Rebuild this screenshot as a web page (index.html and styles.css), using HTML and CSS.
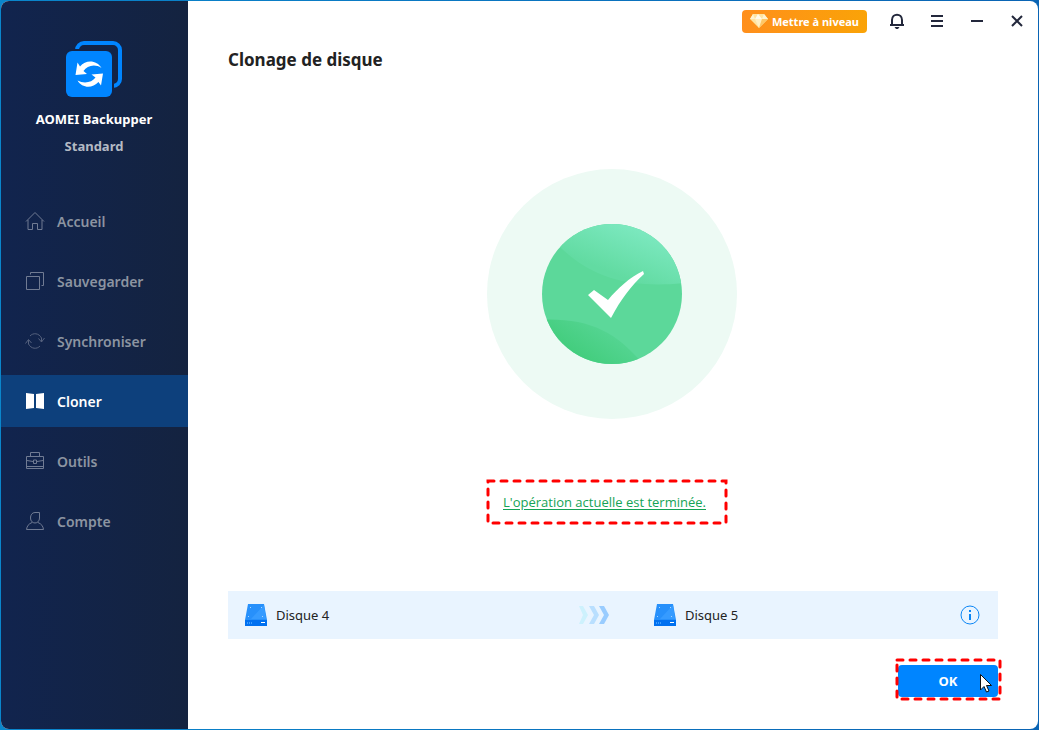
FILE: index.html
```html
<!DOCTYPE html>
<html lang="fr">
<head>
    <meta charset="UTF-8">
    <meta name="viewport" content="width=device-width, initial-scale=1.0">
    <title>AOMEI Backupper</title>
    <link rel="stylesheet" href="styles.css">
</head>
<body>
    <div class="window">
        <aside class="sidebar">
            <div class="brand">
                <svg class="logo" viewBox="0 0 56 56" aria-hidden="true">
                    <rect x="11" y="2" width="43" height="43" rx="7" fill="none" stroke="#0085ff" stroke-width="4"/>
                    <rect x="-1" y="8" width="49" height="49" rx="7" fill="#132346"/>
                    <rect x="0" y="10" width="46" height="46" rx="6" fill="#0085ff"/>
                    <path d="M11.500 21.500 L9.500 34 L21 33 L17.500 30 C21 24.500 29 22.500 35.500 27 C31 19 20 18 14 25.500 Z" fill="#fff"/>
                    <path d="M35 44.500 L37 32.500 L25.500 33.500 L29.500 36.500 C26 41.500 18 43 11.500 39.500 C16 47 26 48 32.500 41 Z" fill="#fff"/>
                </svg>
                <strong class="brand-name">AOMEI Backupper</strong>
                <span class="brand-edition">Standard</span>
            </div>
            <nav class="menu">
                <a href="#accueil" class="menu-item">
                    <svg viewBox="0 0 20 20"><path d="M1 10.500 L10 1.500 L19 10.500 M3 9 V18.500 H7.500 V12.500 H12.500 V18.500 H17 V9"/></svg>
                    Accueil
                </a>
                <a href="#sauvegarder" class="menu-item">
                    <svg viewBox="0 0 20 20"><path d="M1.500 5.500 H14.500 V18.500 H1.500 Z M5.500 3.500 V1.500 H18.500 V14.500 H16.500"/></svg>
                    Sauvegarder
                </a>
                <a href="#synchroniser" class="menu-item dim">
                    <svg viewBox="0 0 20 20"><path d="M5 5 C8 1.500 14 2 16.500 7 V11 M13.500 7.500 L16.500 11 L19.500 7 M15 15 C12 18.500 6 18 3.500 13 V9 M0.500 12.500 L3.500 8.500 L6.500 12"/></svg>
                    Synchroniser
                </a>
                <a href="#cloner" class="menu-item active" aria-current="page">
                    <svg viewBox="0 0 20 20"><path class="solid" d="M1 2 L9 3 V17 L1 18 Z M11 3 L19 2 V18 L11 17 Z"/></svg>
                    Cloner
                </a>
                <a href="#outils" class="menu-item">
                    <svg viewBox="0 0 20 20"><path d="M1.500 5.500 H18.500 V17.500 H1.500 Z M5.500 5.500 V1.500 H14.500 V5.500 M2 9.500 L8 10.500 M12 10.500 L18 9.500 M8.500 9 H11.500 V12.500 H8.500 Z M2 15.500 H18"/></svg>
                    Outils
                </a>
                <a href="#compte" class="menu-item">
                    <svg viewBox="0 0 20 20"><path d="M14.500 1.500 H10 C7 1.500 5.500 4 5.500 7 C5.500 10 7.500 12 10 12 C12.500 12 14.500 10 14.500 7 Z M7 11.500 C3.500 13 2 15 1.500 18.500 H18.500 C18 15 16.500 13 13 11.500"/></svg>
                    Compte
                </a>
            </nav>
        </aside>

        <main class="content">
            <div class="titlebar">
                <button type="button" class="upgrade">
                    <svg viewBox="0 0 20 16" aria-hidden="true">
                        <path d="M4 1 H15 L19 6 L10 15 L1 6 Z" fill="#ffe3a0"/>
                        <path d="M4 1 L6 6 H1 Z M15 1 L13 6 H19 Z" fill="#fff3d0"/>
                        <path d="M6 6 L9 1 L13 6 Z" fill="#fffbee"/>
                        <path d="M6 6 H13 L10 15 Z" fill="#ffefc4"/>
                        <path d="M13 6 H19 L10 15 Z" fill="#ffc766"/>
                    </svg>
                    Mettre à niveau
                </button>
                <button type="button" class="tool" aria-label="Notifications">
                    <svg viewBox="0 0 16 16"><path d="M1 12 H15 M3 12 V7 C3 0 13 0 13 7 V12"/><path class="fill" d="M5.500 14 H10.500 L9 16 H7 Z"/></svg>
                </button>
                <button type="button" class="tool" aria-label="Menu">
                    <svg viewBox="0 0 16 16"><path d="M2 3 H14 M2 8 H14 M2 13 H14"/></svg>
                </button>
                <button type="button" class="tool" aria-label="Réduire">
                    <svg viewBox="0 0 16 16"><path d="M2 8 H14"/></svg>
                </button>
                <button type="button" class="tool" aria-label="Fermer">
                    <svg viewBox="0 0 16 16"><path d="M3 3 L13 13 M13 3 L3 13"/></svg>
                </button>
            </div>

            <div class="page">
                <h1>Clonage de disque</h1>

                <section class="result">
                    <div class="result-inner">
                        <svg class="success" viewBox="0 0 250 250" role="img" aria-label="Terminé">
                            <defs>
                                <clipPath id="disc"><circle cx="125" cy="125" r="70"/></clipPath>
                                <linearGradient id="light" x1="0.300" y1="0.700" x2="0.800" y2="0.100">
                                    <stop offset="0" stop-color="#62dba2"/>
                                    <stop offset="1" stop-color="#81ebc5"/>
                                </linearGradient>
                                <linearGradient id="dark" x1="0.300" y1="0.800" x2="0.900" y2="0.400">
                                    <stop offset="0" stop-color="#40cc7a"/>
                                    <stop offset="1" stop-color="#58d696"/>
                                </linearGradient>
                            </defs>
                            <circle cx="125" cy="125" r="125" fill="#edfaf4"/>
                            <g clip-path="url(#disc)">
                                <rect x="50" y="50" width="150" height="150" fill="#5cd89a"/>
                                <path d="M65 70 C100 108 140 120 198 114 V50 H65 Z" fill="url(#light)"/>
                                <path d="M50 151 C100 148 130 162 158 198 H50 Z" fill="url(#dark)"/>
                            </g>
                            <path d="M101 126 L107 121 L121 131 C131 119 142 109 156 102 L157 105 C144 117 134 130 124 149 Z" fill="#fff"/>
                        </svg>
                        <div class="marked message">
                            <svg class="marker" aria-hidden="true"><rect width="100%" height="100%"/></svg>
                            <a href="#details">L'opération actuelle est terminée.</a>
                        </div>
                    </div>
                </section>

                <div class="disks">
                    <div class="disk">
                        <svg class="disk-icon" viewBox="0 0 22 22" aria-hidden="true">
                            <path d="M3 0 H19 L22 16 H0 Z" fill="#2790fb"/>
                            <path d="M19 1 L21 15 H6 Z" fill="#369bff"/>
                            <path d="M0 16 H22 V22 H0 Z" fill="#0070f0"/>
                            <path d="M5 3 H6 V4 H5 Z M16 3 H17 V4 H16 Z M3 12 H4 V13 H3 Z M17 12 H18 V13 H17 Z" fill="#a8d4ff"/>
                            <path d="M16 18 H20 V19 H16 Z" fill="#fff"/>
                            <path d="M2 18 H3 V20 H2 Z M4 18 H5 V20 H4 Z M6 18 H7 V20 H6 Z" fill="#3c9cff"/>
                        </svg>
                        Disque 4
                    </div>
                    <svg class="arrows" viewBox="0 0 30 18" aria-hidden="true">
                        <path d="M0 0 H4 L9 9 L4 18 H0 L4 9 Z" fill="#cdf1fd"/>
                        <path d="M10 0 H15 L20 9 L15 18 H10 L15 9 Z" fill="#b9dfff"/>
                        <path d="M20 0 H25 L30 9 L25 18 H20 L25 9 Z" fill="#99ccff"/>
                    </svg>
                    <div class="disk target">
                        <svg class="disk-icon" viewBox="0 0 22 22" aria-hidden="true">
                            <path d="M3 0 H19 L22 16 H0 Z" fill="#2790fb"/>
                            <path d="M19 1 L21 15 H6 Z" fill="#369bff"/>
                            <path d="M0 16 H22 V22 H0 Z" fill="#0070f0"/>
                            <path d="M5 3 H6 V4 H5 Z M16 3 H17 V4 H16 Z M3 12 H4 V13 H3 Z M17 12 H18 V13 H17 Z" fill="#a8d4ff"/>
                            <path d="M16 18 H20 V19 H16 Z" fill="#fff"/>
                            <path d="M2 18 H3 V20 H2 Z M4 18 H5 V20 H4 Z M6 18 H7 V20 H6 Z" fill="#3c9cff"/>
                        </svg>
                        Disque 5
                        <button type="button" class="info" aria-label="Informations">
                            <svg viewBox="0 0 20 20"><circle cx="10" cy="10" r="9"/><path d="M10 9 V15 M10 5 V7"/></svg>
                        </button>
                    </div>
                </div>

                <div class="actions">
                    <div class="confirm">
                        <button type="button" class="ok">OK</button>
                        <svg class="marker" aria-hidden="true"><rect width="100%" height="100%"/></svg>
                        <svg class="cursor" viewBox="0 0 12 19" aria-hidden="true"><path d="M0.500 0.500 V16 L4 12.500 L6.500 18 L9 17 L6.500 11.500 H11.500 Z"/></svg>
                    </div>
                </div>
            </div>
        </main>
    </div>
</body>
</html>
```
FILE: styles.css
```css
* {
    box-sizing: border-box;
}

body {
    margin: 0;
    background: linear-gradient(90deg, #0a86cc, #0a64b4);
    color: #222;
    font-family: "Noto Sans", "Open Sans", sans-serif;
    font-size: 13px;
}

button {
    border: 0;
    padding: 0;
    background: none;
    font-family: inherit;
    cursor: pointer;
}

svg {
    display: block;
    flex-shrink: 0;
}

.window {
    display: flex;
    min-height: calc(100vh - 2px);
    margin: 1px;
    border-radius: 8px;
    overflow: hidden;
    background: #fff;
}

/* sidebar */
.sidebar {
    width: 187px;
    flex-shrink: 0;
    background: linear-gradient(90deg, #11244e, #142340);
}

.brand {
    display: flex;
    flex-direction: column;
    align-items: center;
    padding: 40px 1px 0 0;
    line-height: 20px;
}

.logo {
    width: 56px;
    height: 56px;
    margin-bottom: 12px;
}

.brand-name {
    color: #fff;
}

.brand-edition {
    margin-top: 7px;
    color: #b4bac4;
    font-weight: 700;
}

.menu {
    display: flex;
    flex-direction: column;
    gap: 8px;
    margin-top: 39px;
}

.menu-item {
    display: flex;
    align-items: center;
    gap: 12px;
    height: 52px;
    padding-left: 24px;
    color: #8c94a1;
    font-size: 14px;
    font-weight: 600;
    text-decoration: none;
}

.menu-item svg {
    width: 20px;
    height: 20px;
    fill: none;
    stroke: #707b93;
}

.menu-item.dim svg {
    stroke: #55617e;
}

.menu-item.active {
    background: #0d407c;
    color: #fff;
}

.menu-item .solid {
    fill: #fff;
    stroke: none;
}

/* main area */
.content {
    display: flex;
    flex-direction: column;
    flex: 1;
}

.titlebar {
    display: flex;
    align-items: center;
    justify-content: flex-end;
    height: 40px;
    padding-right: 1px;
}

.upgrade {
    display: flex;
    align-items: center;
    gap: 3px;
    height: 23px;
    margin-right: 10px;
    padding: 0 8px 0 7px;
    border-radius: 4px;
    background: linear-gradient(90deg, #ff8f1c, #faa307);
    color: #fff;
    font-size: 11px;
    font-weight: 700;
}

.upgrade svg {
    width: 20px;
    height: 16px;
}

.tool {
    display: flex;
    align-items: center;
    justify-content: center;
    width: 40px;
    height: 40px;
}

.tool svg {
    width: 16px;
    height: 16px;
    fill: none;
    stroke: #23283c;
    stroke-width: 2;
}

.tool .fill {
    fill: #23283c;
    stroke: none;
}

.page {
    display: flex;
    flex-direction: column;
    flex: 1;
    padding: 7px 40px 32px;
}

h1 {
    margin: 0;
    font-size: 17px;
    font-weight: 700;
    line-height: 24px;
}

.result {
    display: flex;
    align-items: center;
    justify-content: center;
    flex: 1;
    padding-top: 30px;
}

.result-inner {
    display: flex;
    flex-direction: column;
    align-items: flex-start;
    gap: 61px;
    width: 252px;
}

.success {
    width: 250px;
    height: 250px;
}

/* dashed red outline */
.marked {
    position: relative;
}

.marker {
    position: absolute;
    inset: 1px;
    width: calc(100% - 3px);
    height: calc(100% - 3px);
    overflow: visible;
    pointer-events: none;
}

.marker rect {
    fill: none;
    stroke: #f00;
    stroke-width: 3;
    stroke-linecap: round;
    stroke-dasharray: 6 7;
}

.message {
    display: flex;
    align-items: center;
    height: 45px;
    padding: 0 22px 0 16px;
    font-family: "Open Sans", "Noto Sans", sans-serif;
    white-space: nowrap;
}

.message a {
    color: #15a356;
    text-underline-offset: 2px;
}

.disks {
    display: grid;
    grid-template-columns: 1fr 67px 1fr;
    align-items: center;
    height: 48px;
    padding: 0 18px 0 17px;
    background: #e9f4ff;
}

.disk {
    display: flex;
    align-items: center;
    gap: 9px;
}

.target {
    padding-left: 8px;
}

.disk-icon {
    width: 22px;
    height: 22px;
}

.arrows {
    width: 30px;
    height: 18px;
}

.info {
    margin-left: auto;
}

.info svg {
    width: 20px;
    height: 20px;
    fill: none;
    stroke: #0a85f5;
    stroke-width: 2;
}

.info circle {
    stroke-width: 1;
}

.actions {
    display: flex;
    justify-content: flex-end;
    margin-top: 26px;
}

.confirm {
    position: relative;
}

.confirm .marker {
    inset: -5px 0 0 -1px;
    width: calc(100% + 3px);
    height: calc(100% + 7px);
}

.ok {
    display: block;
    width: 100px;
    height: 32px;
    border-radius: 4px;
    background: #0085ff;
    color: #fff;
    font-size: 13px;
    font-weight: 700;
}

.cursor {
    position: absolute;
    right: 6px;
    bottom: 4px;
    width: 12px;
    height: 19px;
    fill: #fff;
    stroke: #111;
    pointer-events: none;
}
```
